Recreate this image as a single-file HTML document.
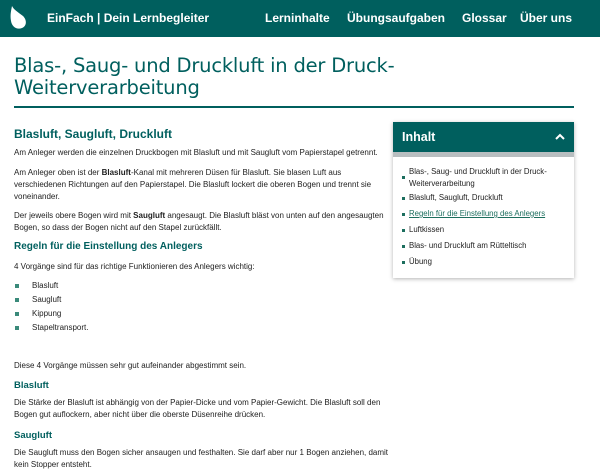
<!DOCTYPE html>
<html><head><meta charset="utf-8"><style>
*{margin:0;padding:0;box-sizing:border-box}
body{width:600px;height:470px;overflow:hidden;background:#fff;font-family:"Liberation Sans",sans-serif;color:#222;position:relative}
.hdr{position:absolute;left:0;top:0;width:600px;height:37px;background:#005f5e;color:#fff}
.hdr span{position:absolute;top:11px;font-size:12px;font-weight:bold;font-family:"Liberation Sans",sans-serif;white-space:nowrap}
.a{position:absolute;white-space:nowrap}
h1{position:absolute;left:14px;top:55px;font-family:"DejaVu Sans",sans-serif;font-weight:normal;font-size:19.5px;line-height:22px;color:#005f5e;letter-spacing:-0.2px}
.rule{position:absolute;left:14px;top:106px;width:560px;height:2px;background:#005f5e}
.h2{font-family:"Liberation Sans",sans-serif;font-size:12px;color:#005f5e;font-weight:bold}
.h3{font-family:"Liberation Sans",sans-serif;font-size:9.5px;color:#005f5e;font-weight:bold}
.p{font-size:8px;line-height:12px;color:#222}
.dot{position:absolute;width:4px;height:4px;background:#3a8a7a}
.box{position:absolute;left:393px;top:122px;width:181px;height:156px;background:#fff;box-shadow:0 1px 4px rgba(0,0,0,.3)}
.bh{height:30px;background:#005f5e;color:#fff;font-family:"Liberation Sans",sans-serif;font-weight:bold;font-size:12.5px;padding:8px 9px}
.bs{height:5px;background:#b8bec0}
.li{position:absolute;left:9px;font-size:7.8px;line-height:12px;color:#222}
.li i{position:absolute;left:0;top:5px;width:3px;height:3px;background:#1c6e5e}
.li b{font-weight:normal;display:block;margin-left:7px}
</style></head><body>
<div class="hdr">
<svg style="position:absolute;left:8px;top:5px" width="20" height="26" viewBox="0 0 20 26"><path d="M4 1 C3 6 2 10 3 16 C4 22 9 25 14 23 C19 21 19 15 15 11 C10 7 6 5 4 1Z" fill="#fff"/></svg>
<span style="left:47px">EinFach | Dein Lernbegleiter</span>
<span style="left:265px">Lerninhalte</span>
<span style="left:347px">Übungsaufgaben</span>
<span style="left:462px">Glossar</span>
<span style="left:520px">Über uns</span>
</div>
<h1>Blas-, Saug- und Druckluft in der Druck-<br>Weiterverarbeitung</h1>
<div class="rule"></div>
<div class="a h2" style="left:14px;top:127px">Blasluft, Saugluft, Druckluft</div>
<div class="a p" style="left:14px;top:147px">Am Anleger werden die einzelnen Druckbogen mit Blasluft und mit Saugluft vom Papierstapel getrennt.</div>
<div class="a p" style="left:14px;top:167px">Am Anleger oben ist der <b>Blasluft</b>-Kanal mit mehreren Düsen für Blasluft. Sie blasen Luft aus<br>verschiedenen Richtungen auf den Papierstapel. Die Blasluft lockert die oberen Bogen und trennt sie<br>voneinander.</div>
<div class="a p" style="left:14px;top:210px">Der jeweils obere Bogen wird mit <b>Saugluft</b> angesaugt. Die Blasluft bläst von unten auf den angesaugten<br>Bogen, so dass der Bogen nicht auf den Stapel zurückfällt.</div>
<div class="a h3" style="left:14px;top:241px;font-size:10px">Regeln für die Einstellung des Anlegers</div>
<div class="a p" style="left:14px;top:261px">4 Vorgänge sind für das richtige Funktionieren des Anlegers wichtig:</div>
<div class="dot" style="left:15px;top:284px"></div><div class="a p" style="left:32px;top:280px">Blasluft</div>
<div class="dot" style="left:15px;top:298px"></div><div class="a p" style="left:32px;top:294px">Saugluft</div>
<div class="dot" style="left:15px;top:312px"></div><div class="a p" style="left:32px;top:308px">Kippung</div>
<div class="dot" style="left:15px;top:326px"></div><div class="a p" style="left:32px;top:322px">Stapeltransport.</div>
<div class="a p" style="left:14px;top:360px">Diese 4 Vorgänge müssen sehr gut aufeinander abgestimmt sein.</div>
<div class="a h3" style="left:14px;top:380px">Blasluft</div>
<div class="a p" style="left:14px;top:397px">Die Stärke der Blasluft ist abhängig von der Papier-Dicke und vom Papier-Gewicht. Die Blasluft soll den<br>Bogen gut auflockern, aber nicht über die oberste Düsenreihe drücken.</div>
<div class="a h3" style="left:14px;top:430px">Saugluft</div>
<div class="a p" style="left:14px;top:447px">Die Saugluft muss den Bogen sicher ansaugen und festhalten. Sie darf aber nur 1 Bogen anziehen, damit<br>kein Stopper entsteht.</div>
<div class="box">
<div class="bh">Inhalt<svg style="position:absolute;right:9px;top:11px" width="10" height="7" viewBox="0 0 10 7"><path d="M1 6 L5 2 L9 6" stroke="#fff" stroke-width="2" fill="none"/></svg></div>
<div class="bs"></div>
<div class="li" style="top:44px"><i style="top:10px"></i><b>Blas-, Saug- und Druckluft in der Druck-<br>Weiterverarbeitung</b></div>
<div class="li" style="top:70px"><i></i><b>Blasluft, Saugluft, Druckluft</b></div>
<div class="li" style="top:86px"><i></i><b style="color:#1c6e5e;text-decoration:underline">Regeln für die Einstellung des Anlegers</b></div>
<div class="li" style="top:102px"><i></i><b>Luftkissen</b></div>
<div class="li" style="top:118px"><i></i><b>Blas- und Druckluft am Rütteltisch</b></div>
<div class="li" style="top:134px"><i></i><b>Übung</b></div>
</div>
</body></html>
